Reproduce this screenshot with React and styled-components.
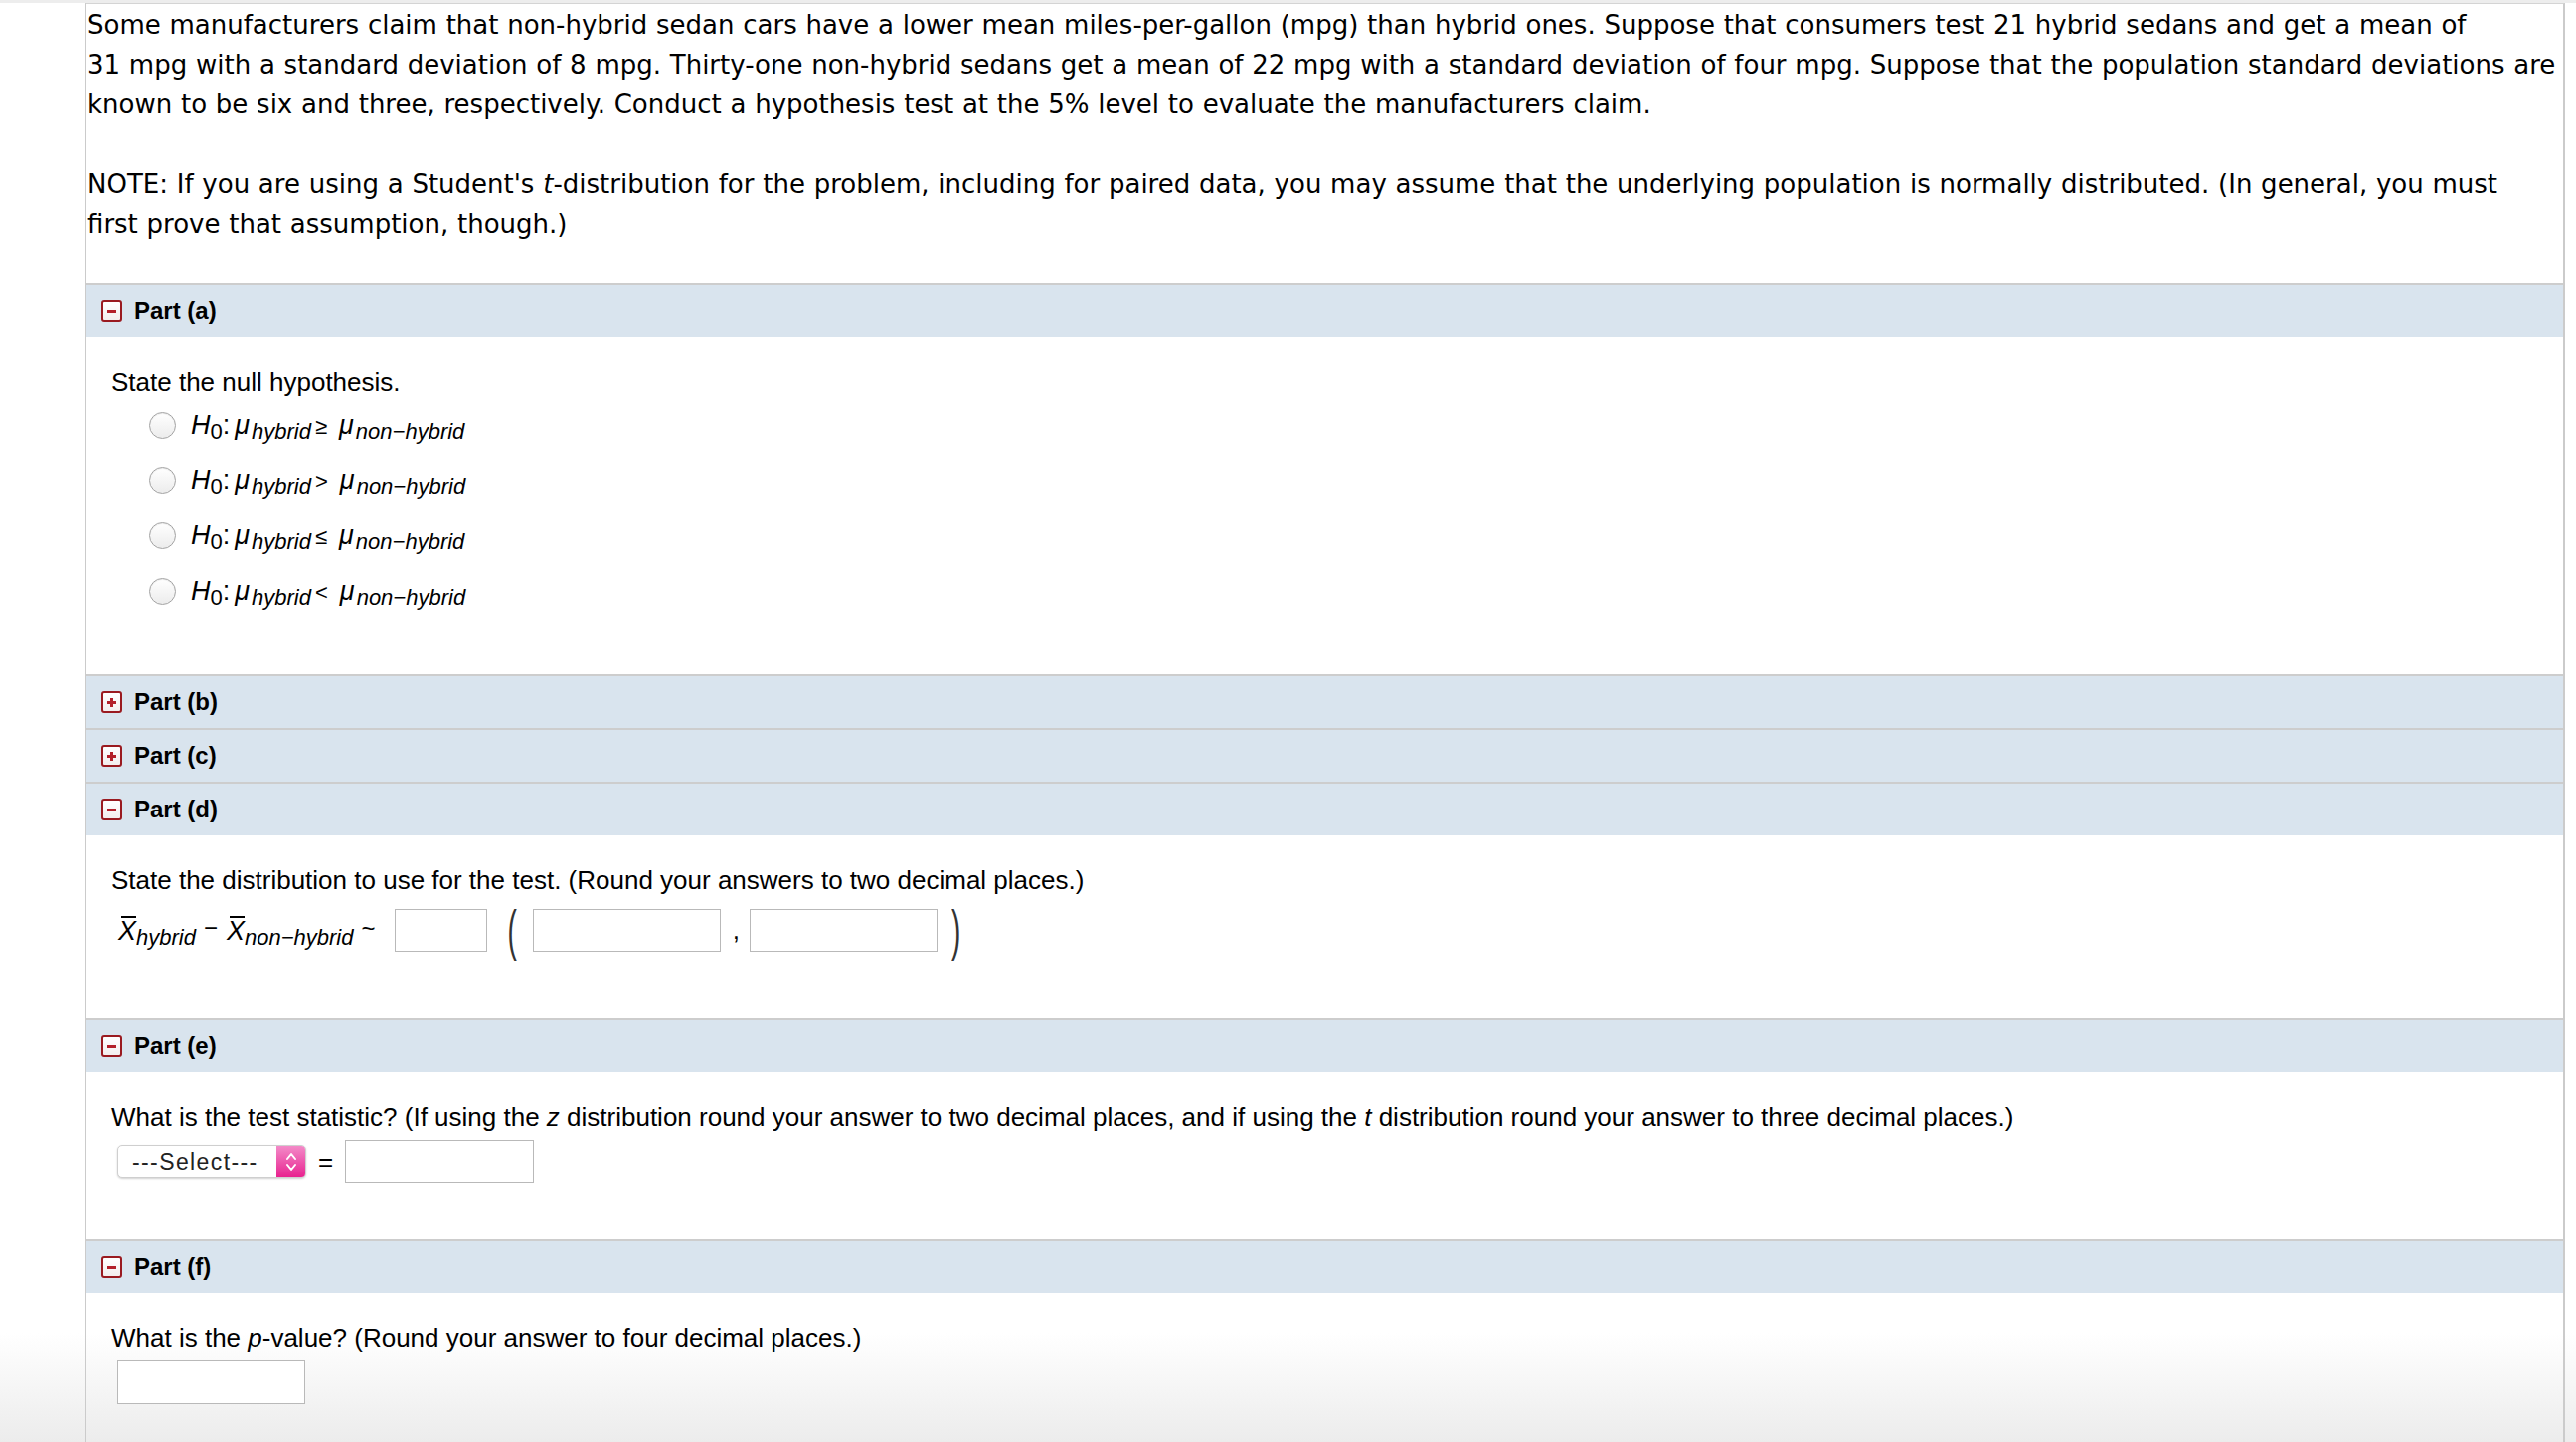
import React from "react";
import styled, { createGlobalStyle } from "styled-components";

const GlobalStyle = createGlobalStyle`
  html, body {
    margin: 0;
    padding: 0;
  }
  body {
    min-height: 1450px;
    background: linear-gradient(to bottom, #ffffff 0, #ffffff 1340px, #ececec 1450px);
    font-family: "Liberation Sans", Arial, sans-serif;
    color: #000;
  }
`;

const Page = styled.div`
  padding: 0 11px 0 85px;
  border-top: 3px solid #ededed;
`;

const Sheet = styled.div`
  border-left: 2px solid #cbcbcb;
  border-right: 2px solid #cbcbcb;
  border-top: 1px solid #d4d4d4;
  min-height: 1446px;
`;

const Intro = styled.div`
  font-family: "DejaVu Sans", Verdana, sans-serif;
  font-size: 26px;
  line-height: 40px;
  word-spacing: 0.5px;
  padding: 1px 0 0 1px;
  margin-bottom: 40px;
  p {
    margin: 0;
  }
  p + p {
    margin-top: 40px;
  }
`;

const PartHeader = styled.div`
  display: flex;
  align-items: center;
  gap: 12px;
  height: 52px;
  padding-left: 15px;
  border-top: 2px solid #cdcdcd;
  background: #d9e4ee;
  font-size: 24px;
  font-weight: bold;
`;

const Toggle = styled.span`
  position: relative;
  width: 17px;
  height: 18px;
  border: 2px solid #9a1a20;
  border-radius: 3px;
  background: linear-gradient(#ffffff, #f3eeee);
  &::before,
  &::after {
    content: "";
    position: absolute;
    background: #b3202a;
  }
  &::before {
    left: 4px;
    top: 7.5px;
    width: 9px;
    height: 3px;
  }
  &::after {
    display: ${(p) => (p.$open ? "none" : "block")};
    left: 7px;
    top: 4.5px;
    width: 3px;
    height: 9px;
  }
`;

const PartBody = styled.div`
  padding: 30px 0 56px 25px;
  font-size: 26px;
`;

const Prompt = styled.div`
  line-height: 30px;
  margin-bottom: ${(p) => (p.$gap !== undefined ? p.$gap : 8)}px;
`;

const RadioRow = styled.label`
  display: flex;
  align-items: center;
  gap: 15px;
  height: 55.5px;
  padding-left: 38px;
`;

const RadioDot = styled.span`
  flex: none;
  width: 25px;
  height: 25px;
  border-radius: 50%;
  border: 1px solid #a3a3a3;
  background: linear-gradient(#ffffff, #ececec);
  box-shadow: inset 0 1px 1px rgba(0, 0, 0, 0.08);
`;

const MathText = styled.span`
  font-size: 27px;
  white-space: nowrap;
  line-height: ${(p) => p.$lh || "normal"};
  margin-left: ${(p) => p.$ml || 0}px;
`;

const Var = styled.span`
  font-style: italic;
  margin-right: ${(p) => p.$gap || 0}px;
`;

const Sub = styled.span`
  font-size: 22px;
  line-height: 0;
  vertical-align: -5px;
  font-style: ${(p) => (p.$upright ? "normal" : "italic")};
`;

const Rel = styled.span`
  font-size: ${(p) => p.$size || 24}px;
  line-height: 0;
  margin: 0 ${(p) => p.$right}px 0 ${(p) => p.$left}px;
  vertical-align: ${(p) => p.$raise || 0}px;
`;

const Bar = styled.span`
  position: relative;
  &::before {
    content: "";
    position: absolute;
    left: 3px;
    right: 0;
    top: 0;
    height: 2px;
    background: #000;
  }
`;

const AnswerRow = styled.div`
  display: flex;
  align-items: ${(p) => (p.$top ? "flex-start" : "center")};
  min-height: ${(p) => p.$h || 44}px;
`;

const Field = styled.div`
  box-sizing: border-box;
  width: ${(p) => p.$w}px;
  height: ${(p) => p.$hgt || 44}px;
  margin: ${(p) => p.$m || "0"};
  border: 1px solid #b9b9b9;
  background: #fff;
  flex: none;
`;

const Paren = styled.span`
  display: inline-block;
  height: 56px;
  line-height: 56px;
  margin: ${(p) => p.$m};
  font-size: 28px;
  color: #333;
  transform: scale(1, 2);
`;

const Sep = styled.span`
  margin: ${(p) => p.$m};
  line-height: 43px;
  font-size: 26px;
`;

const Select = styled.div`
  display: flex;
  box-sizing: border-box;
  width: 190px;
  height: 34px;
  margin-left: 6px;
  border: 1px solid #cfcfcf;
  border-radius: 5px;
  background: #fff;
  box-shadow: 0 1px 2px rgba(0, 0, 0, 0.18);
  overflow: hidden;
`;

const SelectText = styled.span`
  flex: 1;
  padding-left: 14px;
  font-size: 23px;
  letter-spacing: 1.4px;
  line-height: 33px;
  color: #222;
`;

const SelectArrow = styled.span`
  display: flex;
  align-items: center;
  justify-content: center;
  width: 29px;
  background: linear-gradient(#f38ac8, #e8228f);
`;

const Equals = styled.span`
  margin: 0 12px;
  font-size: 26px;
`;

const Italic = styled.i`
  font-style: italic;
`;

function Part({ label, open, children }) {
  return (
    <>
      <PartHeader>
        <Toggle $open={open} />
        <span>Part ({label})</span>
      </PartHeader>
      {open && <PartBody>{children}</PartBody>}
    </>
  );
}

const relations = ["≥", ">", "≤", "<"];

function Hypothesis({ rel }) {
  return (
    <MathText>
      <Var>H</Var>
      <Sub $upright>0</Sub>
      <span style={{ marginRight: 5 }}>:</span>
      <Var $gap={2}>μ</Var>
      <Sub>hybrid</Sub>
      <Rel $left={4} $right={12} $size={22}>
        {rel}
      </Rel>
      <Var $gap={2}>μ</Var>
      <Sub>non−hybrid</Sub>
    </MathText>
  );
}

function Chevrons() {
  return (
    <svg width="12" height="22" viewBox="0 0 12 22" fill="none" stroke="#fff" strokeWidth="2" strokeLinecap="round" strokeLinejoin="round">
      <path d="M2 8 L6 3 L10 8" />
      <path d="M2 14 L6 19 L10 14" />
    </svg>
  );
}

export default function App() {
  return (
    <>
      <GlobalStyle />
      <Page>
        <Sheet>
          <Intro>
            <p>
              Some manufacturers claim that non-hybrid sedan cars have a lower mean miles-per-gallon (mpg) than hybrid ones.
              Suppose that consumers test 21 hybrid sedans and get a mean of 31{"\u00a0"}mpg with a standard deviation of 8 mpg.
              Thirty-one non-hybrid sedans get a mean of 22 mpg with a standard deviation of four mpg. Suppose that the
              population standard deviations are known to be six and three, respectively. Conduct a hypothesis test at the 5%
              level to evaluate the manufacturers claim.
            </p>
            <p>
              NOTE: If you are using a Student's <Italic>t</Italic>-distribution for the problem, including for paired data,
              you may assume that the underlying population is normally distributed. (In general, you must first{"\u00a0"}prove
              that assumption, though.)
            </p>
          </Intro>

          <Part label="a" open>
            <Prompt $gap={1}>State the null hypothesis.</Prompt>
            {relations.map((r) => (
              <RadioRow key={r}>
                <RadioDot />
                <Hypothesis rel={r} />
              </RadioRow>
            ))}
          </Part>

          <Part label="b" />
          <Part label="c" />

          <Part label="d" open>
            <Prompt>State the distribution to use for the test. (Round your answers to two decimal places.)</Prompt>
            <AnswerRow $top $h={60}>
              <MathText $lh="56px" $ml={7}>
                <Bar>
                  <Var>X</Var>
                </Bar>
                <Sub>hybrid</Sub>
                <Rel $size={24} $left={8} $right={9} $raise={4}>
                  −
                </Rel>
                <Bar>
                  <Var>X</Var>
                </Bar>
                <Sub>non−hybrid</Sub>
                <Rel $size={24} $left={8} $right={0} $raise={3}>
                  ~
                </Rel>
              </MathText>
              <Field $w={93} $hgt={43} $m="6px 0 0 20px" />
              <Paren $m="0 16px 0 20px">(</Paren>
              <Field $w={189} $hgt={43} $m="6px 0 0 0" />
              <Sep $m="6px 10px 0 12px">,</Sep>
              <Field $w={189} $hgt={43} $m="6px 0 0 0" />
              <Paren $m="0 0 0 14px">)</Paren>
            </AnswerRow>
          </Part>

          <Part label="e" open>
            <Prompt>
              What is the test statistic? (If using the <Italic>z</Italic> distribution round your answer to two decimal
              places, and if using the <Italic>t</Italic> distribution round your answer to three decimal places.)
            </Prompt>
            <AnswerRow>
              <Select>
                <SelectText>---Select---</SelectText>
                <SelectArrow>
                  <Chevrons />
                </SelectArrow>
              </Select>
              <Equals>=</Equals>
              <Field $w={190} />
            </AnswerRow>
          </Part>

          <Part label="f" open>
            <Prompt>
              What is the <Italic>p</Italic>-value? (Round your answer to four decimal places.)
            </Prompt>
            <AnswerRow>
              <Field $w={189} $m="0 0 0 6px" />
            </AnswerRow>
          </Part>
        </Sheet>
      </Page>
    </>
  );
}
